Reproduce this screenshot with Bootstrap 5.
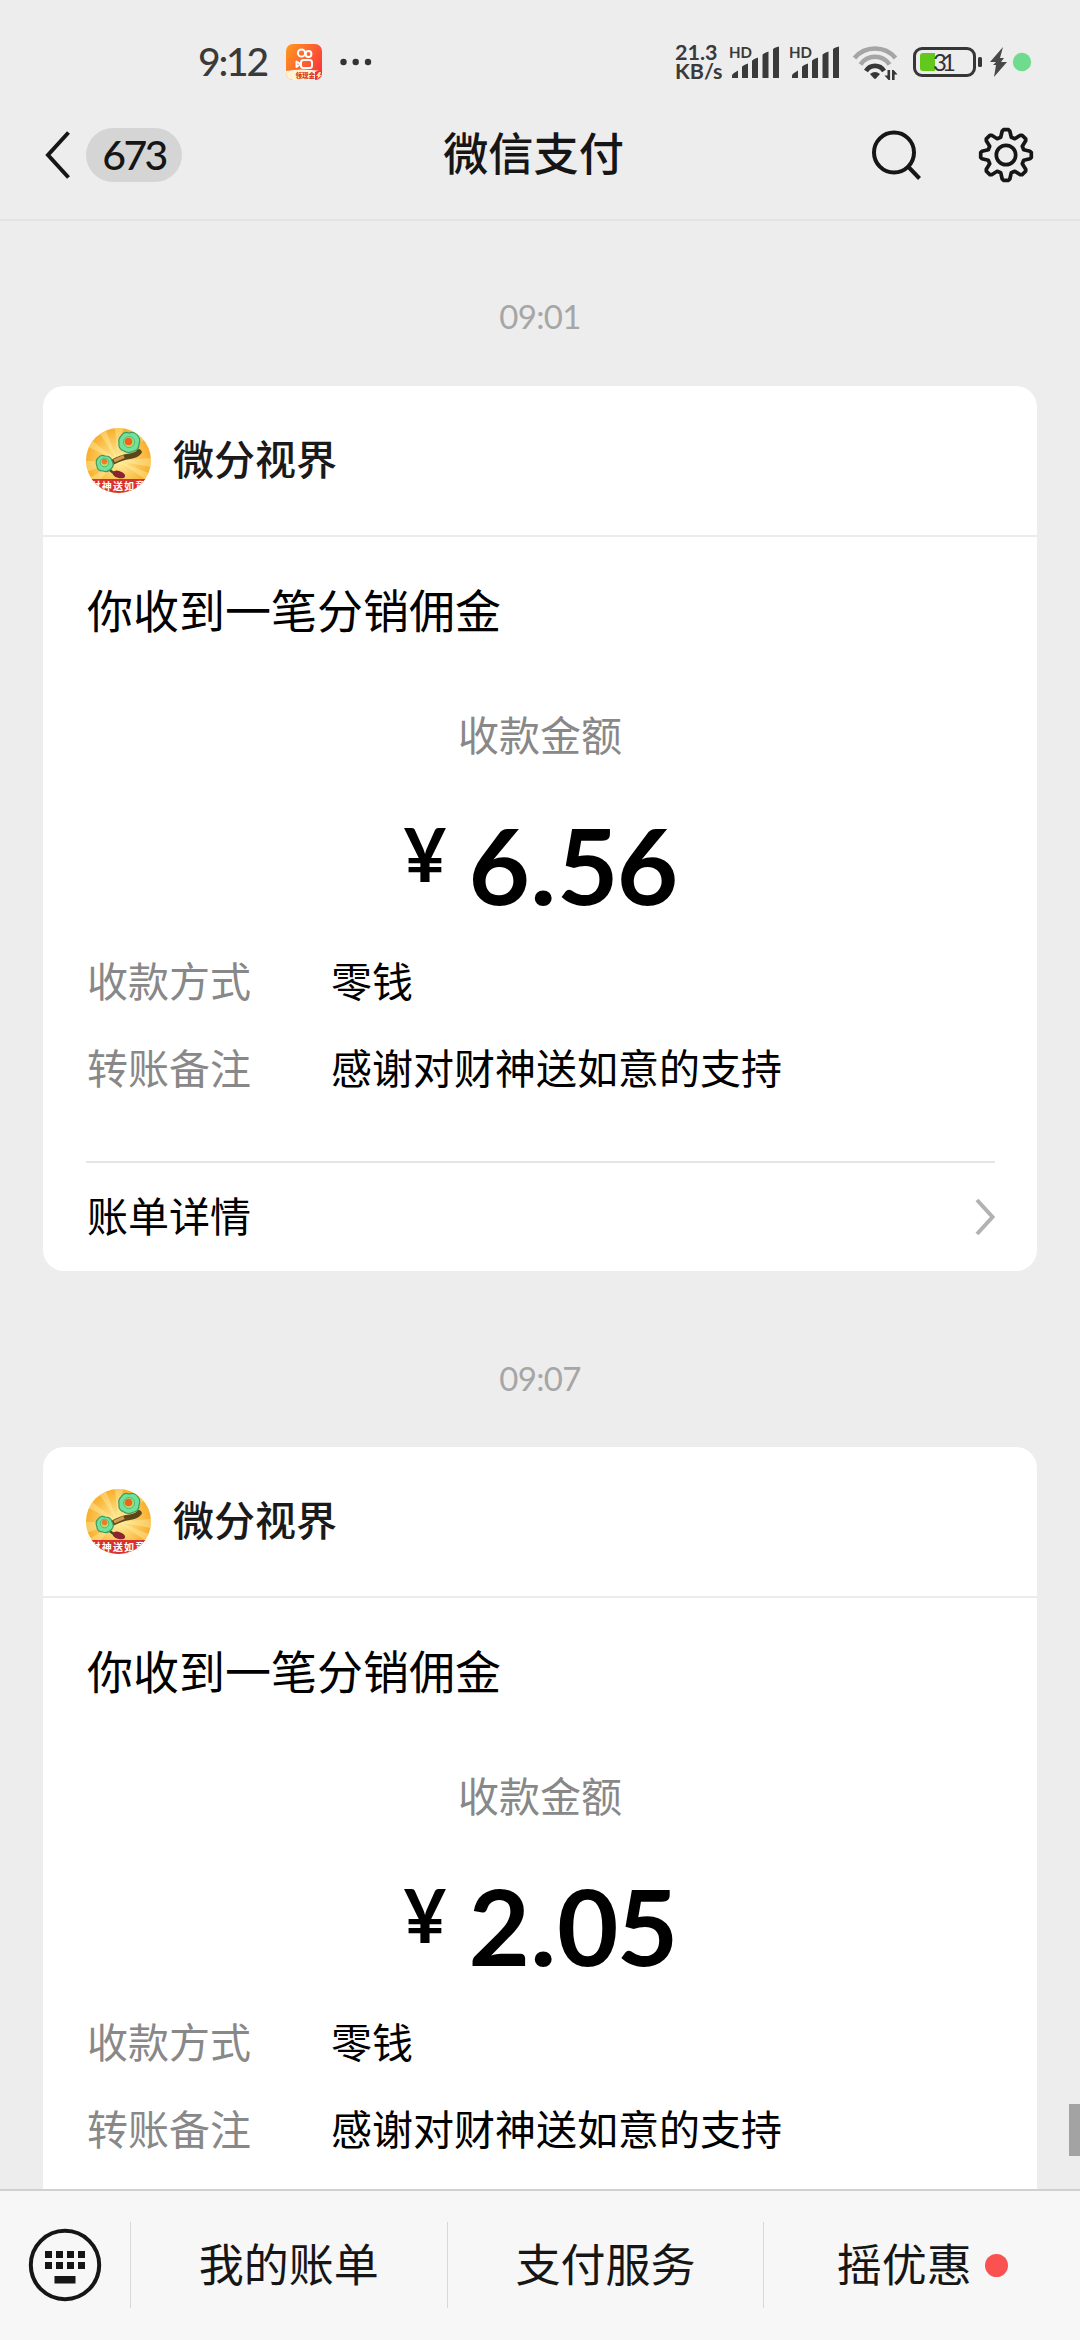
<!DOCTYPE html>
<html lang="zh-CN">
<head>
<meta charset="utf-8">
<meta name="viewport" content="width=device-width, initial-scale=1">
<title>微信支付</title>
<link href="https://cdn.jsdelivr.net/npm/bootstrap@5.3.0/dist/css/bootstrap.min.css" rel="stylesheet">
<style>
  body { background: #ededed; color: #000; font-family: "Noto Sans CJK SC", sans-serif; }
  svg { display: block; flex: none; }
  .screen { width: 1080px; height: 2340px; }
  .num { font-family: Lato, "Noto Sans CJK SC", sans-serif; }

  .status-bar { height: 84px; padding: 40px 0 0 198px; color: #3a3a3a; }
  .status-bar > * { height: 44px; }
  .clock { width: 88px; font-size: 39px; line-height: 43px; font-weight: 500; letter-spacing: -2.2px; white-space: nowrap; }
  .net-speed { width: 54px; font-size: 21.500px; font-weight: 700; padding-top: 3px; white-space: nowrap; }
  .net-speed > span { line-height: 19px; height: 19px; }

  .title-bar { height: 137px; border-bottom: 2px solid #e4e4e4; padding: 7px 46px 0 44px; color: #161616; }
  .side-left { width: 294px; }
  .side-right { width: 305px; gap: 56px; }
  .unread { width: 96px; height: 54px; margin-left: 13px; border-radius: 27px; background: #d5d5d5; font-size: 41px; line-height: 53px; letter-spacing: -2.6px; }
  .page-title { font-size: 45.2px; line-height: 60px; padding-bottom: 7px; }
  .medium { font-weight: 500; }

  .chat { min-height: 0; }
  .stamp { font-size: 33px; line-height: 40px; letter-spacing: -.7px; color: #a6a6a6; }
  .stamp-first { padding: 75px 0 50px; }
  .stamp-next { padding: 87px 0 49px; }
  .bill { width: 994px; height: 885px; border-radius: 21px; background: #fff; flex: none; }
  .bill-head { height: 151px; padding: 0 43px; gap: 22px; border-bottom: 2px solid #ececec; font-size: 41px; color: #1a1a1a; }
  .bill-body { padding: 41px 43px 0; font-size: 41px; line-height: 60px; }
  .lift { padding-bottom: 5px; }
  .notice { font-size: 46px; height: 60px; padding-left: 1px; }
  .muted { color: #888; }
  .amount-label { margin-top: 65px; }
  .amount { height: 110px; margin-top: 46px; }
  .yen { font-size: 74px; line-height: 90px; margin-right: 22px; }
  .digits { font-size: 106px; line-height: 110px; letter-spacing: -1.8px; }
  .point { font-family: Roboto, sans-serif; }
  .detail { padding-left: 1px; margin-top: 27px; }
  .amount + .detail { margin-top: 30px; }
  .detail-key { width: 244px; }
  .bill-foot { margin: auto 42px 0 43px; height: 110px; border-top: 2px solid #e5e5e5; font-size: 41px; padding-left: 1px; }

  .menu-bar { height: 151px; background: #f7f7f7; border-top: 2px solid #cfd1d1; font-size: 45px; color: #161616; padding-bottom: 1px; }
  .menu-key { width: 130px; }
  .menu-cell { border-left: 1px solid #d8d8d8; height: 86px; gap: 13px; flex: 1 1 0; }
  .red-dot { width: 23px; height: 23px; background: #fa5151; }
  .scroll-thumb { right: 0; top: 2104px; width: 11px; height: 52px; background: #a3a3a3; }
</style>
</head>
<body>
<svg width="0" height="0" class="position-absolute" aria-hidden="true">
  <defs>
    <symbol id="signal" viewBox="0 0 54 44">
      <text x="0" y="18" font-family="Lato, sans-serif" font-size="16" font-weight="700" fill="#3a3a3a" textLength="23" lengthAdjust="spacingAndGlyphs">HD</text>
      <path fill="#3a3a3a" d="M3 38V36q0-2 2-3l4-2.500V38zM13 38V27q0-1.500 6-3.500V38zM23 38V21q0-1.500 6-3.500V38zM33.500 38V15q0-1.500 6-3.500V38zM44 38V9.500q0-1.500 6-3V38z"/>
    </symbol>
    <symbol id="avatar" viewBox="0 0 65 65">
      <clipPath id="disc"><circle cx="32.500" cy="32.500" r="32.500"/></clipPath>
      <radialGradient id="sun"><stop offset="0" stop-color="#fff0a0"/><stop offset="1" stop-color="#f9ae2b"/></radialGradient>
      <g clip-path="url(#disc)">
        <rect width="65" height="65" fill="url(#sun)"/>
        <path fill="#fff2b0" opacity=".4" d="M32 33 0 18V8zM32 33 10 0h9zM32 33 29 0h8zM32 33 0 44V33zM32 33 65 46v9zM32 33 65 30v9zM32 33 6 60l-6-8zM32 33 60 0h5v6z"/>
        <path d="M53 24C47 31 42 25 27 34" fill="none" stroke="#5b4519" stroke-width="5.500" stroke-linecap="round"/>
        <path d="M38 28.500 28 33" fill="none" stroke="#d39a49" stroke-width="3.500"/>
        <path d="M22 40q4 5 9 6" fill="none" stroke="#38551f" stroke-width="2.500"/>
        <ellipse cx="33" cy="46.500" rx="6.500" ry="3.500" fill="#8a2430" transform="rotate(18 33 46)"/>
        <path d="M35 8q3-5 8-3 6-2 9 3 3 4 1 8 0 6-5 7-6 3-10 0-6-2-5-8-1-4 2-7z" fill="#6fe29c" stroke="#3c9a63" stroke-width="1.200"/>
        <circle cx="43" cy="14" r="5.500" fill="#b9dd6d" stroke="#4dbb7c" stroke-width="1"/>
        <circle cx="42.500" cy="13.500" r="3.800" fill="#ef6320"/>
        <path d="M12 30q3-4 7-2 6 0 7 5 3 4-1 8-4 4-8 2-6 0-6-5-2-5 1-8z" fill="#6fe29c" stroke="#3c9a63" stroke-width="1.200"/>
        <circle cx="18.500" cy="34.500" r="4.300" fill="#b9dd6d" stroke="#4dbb7c" stroke-width="1"/>
        <circle cx="18.500" cy="33.500" r="2.800" fill="#ef7a28"/>
        <rect y="51" width="65" height="14" fill="#d9322e"/>
        <text x="32.500" y="61.500" text-anchor="middle" font-family="Noto Sans CJK SC, sans-serif" font-size="10" font-weight="700" letter-spacing="1.200" fill="#fff">财神送如意</text>
      </g>
    </symbol>
  </defs>
</svg>

<main class="screen d-flex flex-column position-relative overflow-hidden">
  <div class="status-bar d-flex flex-shrink-0">
    <div class="clock num">9:12</div>
    <svg width="88" height="44" viewBox="0 0 88 44" class="me-auto">
      <defs>
        <linearGradient id="hot" x1="0" y1="0" x2="1" y2=".6"><stop offset="0" stop-color="#ff9a1f"/><stop offset="1" stop-color="#fb3b3b"/></linearGradient>
        <clipPath id="tile"><rect y="4" width="36" height="36" rx="7"/></clipPath>
      </defs>
      <g clip-path="url(#tile)">
        <rect y="4" width="36" height="36" fill="url(#hot)"/>
        <path d="M0 31q14-3 36 0v9H0z" fill="#fff3d2"/>
        <path d="M29 40V32q3-2 7-2v10z" fill="#f0323c"/>
        <text x="9.500" y="38.300" font-family="Noto Sans CJK SC, sans-serif" font-size="6.500" font-weight="900" fill="#d93a22">领现金</text>
        <path d="m31 39 1-3h-2l3-4h2l-1 3h2z" fill="#ffe28a"/>
      </g>
      <g fill="none" stroke="#fff" stroke-width="2">
        <circle cx="15.500" cy="13" r="3.600"/><circle cx="22.500" cy="14" r="2.900"/>
        <rect x="15" y="20" width="11" height="8" rx="2.500"/>
        <path d="m10.500 21.500 4 2.500-4 3z" stroke-linejoin="round"/>
      </g>
      <g fill="#333"><circle cx="57.500" cy="22" r="3.200"/><circle cx="69.700" cy="22" r="3.200"/><circle cx="82" cy="22" r="3.200"/></g>
    </svg>
    <div class="net-speed num d-flex flex-column"><span>21.3</span><span>KB/s</span></div>
    <svg width="60" height="44" viewBox="0 0 60 44"><use href="#signal" width="54" height="44"/></svg>
    <svg width="60" height="44" viewBox="0 0 60 44"><use href="#signal" width="54" height="44"/></svg>
    <svg width="64" height="44" viewBox="-3 -4 64 44">
      <g fill="none" stroke-width="4.600">
        <path d="M2.500 14a27 27 0 0 1 41 0" stroke="#a5a5a5"/>
        <path d="M8.500 20.500a17.500 17.500 0 0 1 29 0" stroke="#a5a5a5"/>
        <path d="M14 27a10.500 10.500 0 0 1 18 0" stroke="#363636"/>
      </g>
      <path d="M18 30q5-4 10 0l-4 4.500q-1 .8-2 0z" fill="#363636"/>
      <path d="M35.500 26h2.600v10h-1.600l-4-4.500h3zM40 36h2.600v-5.500h3l-4-4.500H40z" fill="#363636"/>
    </svg>
    <svg width="167" height="44" viewBox="0 0 167 44">
      <rect x="1.500" y="8.500" width="60" height="27" rx="7.500" fill="none" stroke="#363636" stroke-width="3"/>
      <path d="M10 13h12v18H10q-3 0-3-3V16q0-3 3-3z" fill="#62c81c"/>
      <text x="20" y="31" font-family="Lato, sans-serif" font-size="24" fill="#333" textLength="23" lengthAdjust="spacing">31</text>
      <rect x="65" y="17" width="4" height="10" rx="1.500" fill="#363636"/>
      <path d="m90 7-13 15h6l-3 3h3l-2 12 13-15h-6l3-4h-4z" fill="#484848"/>
      <circle cx="109" cy="22" r="9.200" fill="#6edb8f"/>
    </svg>
  </div>

  <header class="title-bar d-flex align-items-center justify-content-between flex-shrink-0">
    <div class="side-left d-flex align-items-center">
      <svg width="29" height="48" viewBox="0 0 29 48"><path d="M24.500 1.500 4 24l20.500 22.500" fill="none" stroke="#161616" stroke-width="4"/></svg>
      <span class="unread num medium text-center">673</span>
    </div>
    <h1 class="page-title medium m-0">微信支付</h1>
    <div class="side-right d-flex align-items-center justify-content-end">
      <svg width="54" height="54" viewBox="0 0 54 54"><circle cx="26" cy="24.500" r="20" fill="none" stroke="#161616" stroke-width="4"/><path d="m40.500 39 11 11.500" stroke="#161616" stroke-width="4"/></svg>
      <svg width="56" height="56" viewBox="-28 -28 56 56" fill="none" stroke="#161616" stroke-width="3.700" stroke-linejoin="round">
        <circle r="9.700"/>
        <path d="M-5.300-17.700-3.800-24-2.500-25.300 2.500-25.300 3.800-24 5.300-17.700 8.800-16.300 14.300-19.700 16.100-19.700 19.700-16.100 19.700-14.300 16.300-8.800 17.700-5.300 24-3.800 25.300-2.500 25.300 2.500 24 3.800 17.700 5.300 16.300 8.800 19.700 14.300 19.700 16.100 16.100 19.700 14.300 19.700 8.800 16.300 5.300 17.700 3.800 24 2.500 25.300-2.500 25.300-3.800 24-5.300 17.700-8.800 16.300-14.300 19.700-16.100 19.700-19.700 16.100-19.700 14.300-16.300 8.800-17.700 5.300-24 3.800-25.300 2.500-25.300-2.500-24-3.800-17.700-5.300-16.300-8.800-19.700-14.300-19.700-16.100-16.100-19.700-14.300-19.700-8.800-16.300z"/>
      </svg>
    </div>
  </header>

  <section class="chat d-flex flex-column align-items-center flex-grow-1 overflow-hidden">
    <time class="stamp stamp-first num">09:01</time>
    <article class="bill d-flex flex-column">
      <div class="bill-head d-flex align-items-center">
        <svg width="65" height="65"><use href="#avatar"/></svg><span class="medium lift">微分视界</span>
      </div>
      <div class="bill-body">
        <div class="notice">你收到一笔分销佣金</div>
        <div class="amount-label muted text-center">收款金额</div>
        <div class="amount num d-flex justify-content-center fw-bold"><span class="yen">¥</span><span class="digits">6<span class="point">.</span>56</span></div>
        <div class="detail d-flex"><span class="detail-key muted">收款方式</span><span>零钱</span></div>
        <div class="detail d-flex"><span class="detail-key muted">转账备注</span><span>感谢对财神送如意的支持</span></div>
      </div>
      <div class="bill-foot d-flex align-items-center justify-content-between">
        <span class="lift">账单详情</span>
        <svg width="20" height="38" viewBox="0 0 20 38"><path d="m2 2 15.500 17L2 36" fill="none" stroke="#b2b2b2" stroke-width="4"/></svg>
      </div>
    </article>

    <time class="stamp stamp-next num">09:07</time>
    <article class="bill d-flex flex-column">
      <div class="bill-head d-flex align-items-center">
        <svg width="65" height="65"><use href="#avatar"/></svg><span class="medium lift">微分视界</span>
      </div>
      <div class="bill-body">
        <div class="notice">你收到一笔分销佣金</div>
        <div class="amount-label muted text-center">收款金额</div>
        <div class="amount num d-flex justify-content-center fw-bold"><span class="yen">¥</span><span class="digits">2<span class="point">.</span>05</span></div>
        <div class="detail d-flex"><span class="detail-key muted">收款方式</span><span>零钱</span></div>
        <div class="detail d-flex"><span class="detail-key muted">转账备注</span><span>感谢对财神送如意的支持</span></div>
      </div>
    </article>
  </section>

  <nav class="menu-bar d-flex align-items-center flex-shrink-0">
    <div class="menu-key d-flex justify-content-center">
      <svg width="74" height="74" viewBox="-37 -37 74 74" fill="#161616">
        <circle r="34.200" fill="none" stroke="#161616" stroke-width="4"/>
        <path d="M-20-14h7v7h-7zM-9-14h7v7h-7zM2-14h7v7H2zM13-14h7v7h-7zM-20-3h7v7h-7zM-9-3h7v7h-7zM2-3h7v7H2zM13-3h7v7h-7zM-10.500 11h21v7.500h-21z"/>
      </svg>
    </div>
    <div class="menu-cell d-flex align-items-center justify-content-center"><span class="lift">我的账单</span></div>
    <div class="menu-cell d-flex align-items-center justify-content-center"><span class="lift">支付服务</span></div>
    <div class="menu-cell d-flex align-items-center justify-content-center"><span class="lift">摇优惠</span><span class="red-dot rounded-circle"></span></div>
  </nav>
  <div class="scroll-thumb position-absolute"></div>
</main>
<script src="https://cdn.jsdelivr.net/npm/bootstrap@5.3.0/dist/js/bootstrap.bundle.min.js"></script>
</body>
</html>
